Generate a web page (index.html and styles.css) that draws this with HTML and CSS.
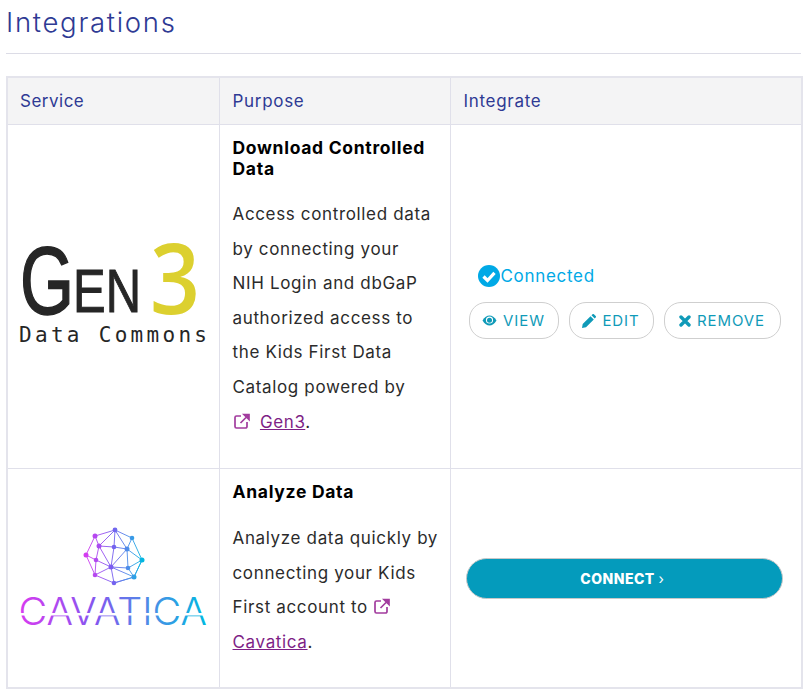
FILE: index.html
```html
<!DOCTYPE html>
<html lang="en">
<head>
<meta charset="utf-8">
<title>Integrations</title>
<link rel="stylesheet" href="styles.css">
</head>
<body>
<main class="page">
  <h1 class="title">Integrations</h1>
  <hr class="rule">
  <table class="grid">
    <colgroup><col class="col-a"><col class="col-b"><col class="col-c"></colgroup>
    <thead>
      <tr><th>Service</th><th>Purpose</th><th>Integrate</th></tr>
    </thead>
    <tbody>
      <tr class="row-one">
        <td class="logo-cell">
          <svg class="logo" width="212" height="140" viewBox="0 0 212 140">
            <text class="gen-g" x="12" y="88" textLength="54" lengthAdjust="spacingAndGlyphs">G</text>
            <text class="gen-en" x="65" y="86" textLength="68" lengthAdjust="spacingAndGlyphs">EN</text>
            <text class="gen-3" x="142" y="88" textLength="50" lengthAdjust="spacingAndGlyphs">3</text>
            <text class="gen-sub" x="11" y="116" textLength="188">Data Commons</text>
          </svg>
        </td>
        <td class="purpose">
          <h2 class="purpose-title">Download Controlled<br>Data</h2>
          <p class="purpose-text">Access controlled data<br>by connecting your<br>NIH Login and dbGaP<br>authorized access to<br>the Kids First Data<br>Catalog powered by<br><svg class="ext ext-gap" width="18" height="18" viewBox="0 0 18 18"><path d="M14 10v4.500a1.500 1.500 0 0 1-1.500 1.500h-9A1.500 1.500 0 0 1 2 14.500v-9A1.500 1.500 0 0 1 3.500 4H8" fill="none" stroke="currentColor" stroke-width="1.700"/><path d="M7.500 11 14.500 4M11 2.500H16V7.500z" fill="currentColor" stroke="currentColor" stroke-width="1.700"/></svg> <a class="link" href="#">Gen3</a>.</p>
        </td>
        <td class="action">
          <div class="status">
            <svg width="22" height="22" viewBox="0 0 22 22"><circle cx="11" cy="11" r="11" fill="#00a9e6"/><path d="M5.500 11.500 9.500 15.500 16.500 7.800" fill="none" stroke="#fff" stroke-width="3.200"/></svg>
            <span>Connected</span>
          </div>
          <div class="buttons">
            <a class="btn btn-view" href="#"><svg width="15" height="11" viewBox="0 0 15 11"><path d="M.5 5.500C2.500 2 5 .5 7.500.5s5 1.500 7 5c-2 3.500-4.500 5-7 5s-5-1.500-7-5z" fill="currentColor"/><circle cx="7.500" cy="5" r="3.600" fill="#fff"/><circle cx="7.500" cy="5.300" r="2.500" fill="currentColor"/></svg>VIEW</a>
            <a class="btn btn-edit" href="#"><svg width="14" height="14" viewBox="0 0 14 14"><path d="M0 14l.7-4L8.500 2.200l3.300 3.300L4 13.300zM9.500 1.200 10.500.3a1 1 0 0 1 1.400 0l1.800 1.800a1 1 0 0 1 0 1.400l-1 1z" fill="currentColor"/></svg>EDIT</a>
            <a class="btn btn-remove" href="#"><svg width="12" height="12" viewBox="0 0 12 12"><path d="M2 2 10 10M10 2 2 10" stroke="currentColor" stroke-width="3.400" stroke-linecap="round"/></svg>REMOVE</a>
          </div>
        </td>
      </tr>
      <tr class="row-two">
        <td class="logo-cell">
          <svg class="logo" width="212" height="110" viewBox="7 522 212 110">
            <defs>
              <linearGradient id="cavIcon" gradientUnits="userSpaceOnUse" x1="85" y1="0" x2="142" y2="0"><stop offset="0" stop-color="#d53cf0"/><stop offset=".45" stop-color="#7a5cf0"/><stop offset=".75" stop-color="#4a90e8"/><stop offset="1" stop-color="#00b8e0"/></linearGradient>
              <linearGradient id="cavText" gradientUnits="userSpaceOnUse" x1="20" y1="0" x2="206" y2="0"><stop offset="0" stop-color="#d53cf0"/><stop offset=".4" stop-color="#8357ef"/><stop offset=".7" stop-color="#4c8ee6"/><stop offset="1" stop-color="#00b8e0"/></linearGradient>
            </defs>
            <g class="cav-lines" stroke="url(#cavIcon)">
              <path d="M114 529 94 535 85 554 94 574 113 582 133 576 141 559 131 537Z"/>
              <path d="M114 529 98 545 95 559 94 574M94 535 98 545M98 545 113 546 126 548 131 537M114 529 113 546 110 566 94 574M114 529 126 548 141 559 127 567 133 576M126 548 127 567 110 566 113 582 133 576M126 548 110 566M85 554 95 559 110 566M98 545 110 566M141 559 133 576M110 566 133 576"/>
            </g>
            <g fill="url(#cavIcon)">
              <circle cx="114" cy="529" r="2.400"/><circle cx="94" cy="535" r="2.500"/><circle cx="131" cy="537" r="2.300"/><circle cx="98" cy="545" r="2.500"/><circle cx="113" cy="546" r="2.300"/><circle cx="126" cy="548" r="2.500"/><circle cx="85" cy="554" r="2.500"/><circle cx="95" cy="559" r="2.300"/><circle cx="141" cy="559" r="2.500"/><circle cx="110" cy="566" r="2.500"/><circle cx="127" cy="567" r="2.300"/><circle cx="94" cy="574" r="2.300"/><circle cx="133" cy="576" r="2.500"/><circle cx="113" cy="582" r="2.300"/>
            </g>
            <text class="cav-word" x="17.500" y="624" textLength="188.500" lengthAdjust="spacingAndGlyphs" fill="url(#cavText)">CAVATICA</text>
            <rect class="cav-slice" x="15" y="612" width="196" height="2.500"/>
          </svg>
        </td>
        <td class="purpose">
          <h2 class="purpose-title">Analyze Data</h2>
          <p class="purpose-text">Analyze data quickly by<br>connecting your Kids<br>First account to <svg class="ext" width="18" height="18" viewBox="0 0 18 18"><path d="M14 10v4.500a1.500 1.500 0 0 1-1.500 1.500h-9A1.500 1.500 0 0 1 2 14.500v-9A1.500 1.500 0 0 1 3.500 4H8" fill="none" stroke="currentColor" stroke-width="1.700"/><path d="M7.500 11 14.500 4M11 2.500H16V7.500z" fill="currentColor" stroke="currentColor" stroke-width="1.700"/></svg><br><a class="link" href="#">Cavatica</a>.</p>
        </td>
        <td class="action">
          <a class="connect" href="#">CONNECT <span class="chev">›</span></a>
        </td>
      </tr>
    </tbody>
  </table>
</main>
</body>
</html>
```
FILE: styles.css
```css
* { box-sizing: border-box; }
html, body { margin: 0; background: #fff; }
body { font-family: Inter, "Open Sans", sans-serif; color: #2b2b2b; }
.page { padding: 0 9px 0 6px; }
.title { margin: 0; padding-top: 6px; height: 53px; font-size: 27.500px; line-height: 32px; font-weight: 300; color: #2e3a94; letter-spacing: 1.700px; }
.rule { margin: 0 0 22px; height: 1px; border: 0; background: #dcdce6; }
.grid { width: 795px; table-layout: fixed; border-collapse: collapse; border: 2px solid #e4e4ec; }
.col-a { width: 212px; }
.col-b { width: 231px; }
.col-c { width: 352px; }
th, td { border: 1px solid #e0e0ea; padding: 0 13px; }
th { height: 47px; background: #f4f4f5; color: #2e3a94; font-size: 17px; font-weight: 400; text-align: left; letter-spacing: .7px; }
th:first-child { padding-left: 12px; letter-spacing: .5px; }
.row-one { height: 344px; }
.row-two { height: 220px; }
.logo-cell { padding: 0; text-align: center; vertical-align: middle; }
.logo { display: block; margin: 0 auto; }
.gen-g { font: 400 96px "Liberation Sans", sans-serif; fill: #262626; stroke: #262626; stroke-width: 1.500; }
.gen-en { font: 400 62px "Liberation Sans", sans-serif; fill: #262626; stroke: #262626; stroke-width: 1; }
.gen-3 { font: 600 97px "Open Sans", sans-serif; fill: #dcd02f; }
.gen-sub { font: 400 21px "DejaVu Sans Mono", monospace; fill: #262626; }
.cav-lines { fill: none; stroke-width: .9; }
.cav-word { font: 300 38px Inter, sans-serif; }
.cav-slice { fill: #fff; }
.purpose { vertical-align: top; padding-top: 12px; }
.purpose-title { margin: 0 0 18.500px; font-size: 17.500px; line-height: 21px; font-weight: 700; color: #000; letter-spacing: .7px; }
.row-two .purpose-title { margin-bottom: 19.500px; }
.purpose-text { margin: 0; font-size: 17px; line-height: 34.600px; color: #2b2b2b; white-space: nowrap; letter-spacing: .65px; }
.ext { color: #a23c9e; vertical-align: -2px; }
.ext-gap { margin-right: 4px; }
.link { color: #7e1f86; text-decoration: underline; }
.action { vertical-align: middle; padding: 12px 16px 0; }
.status { display: flex; align-items: center; gap: 1px; margin: 0 0 15px 11px; color: #00a9e6; font-size: 17px; letter-spacing: .7px; }
.buttons { display: flex; gap: 10px; margin-left: 2px; }
.btn { display: flex; align-items: center; justify-content: center; gap: 6px; height: 37px; border: 1.500px solid #cfcfcf; border-radius: 17px; background: #fff; color: #0f9ab8; font-size: 15px; letter-spacing: .9px; text-decoration: none; }
.btn-view { width: 90px; }
.btn-edit { width: 85px; }
.btn-remove { width: 117px; }
.row-two .action { padding: 2px 18px 0 15px; }
.connect { display: block; height: 41px; padding-right: 4px; border: 1.500px solid #c8c8c8; border-radius: 21px; background: #049bbc; color: #fff; font-size: 14px; font-weight: 800; line-height: 39px; letter-spacing: .5px; text-align: center; text-decoration: none; }
.chev { font-weight: 400; }
```
